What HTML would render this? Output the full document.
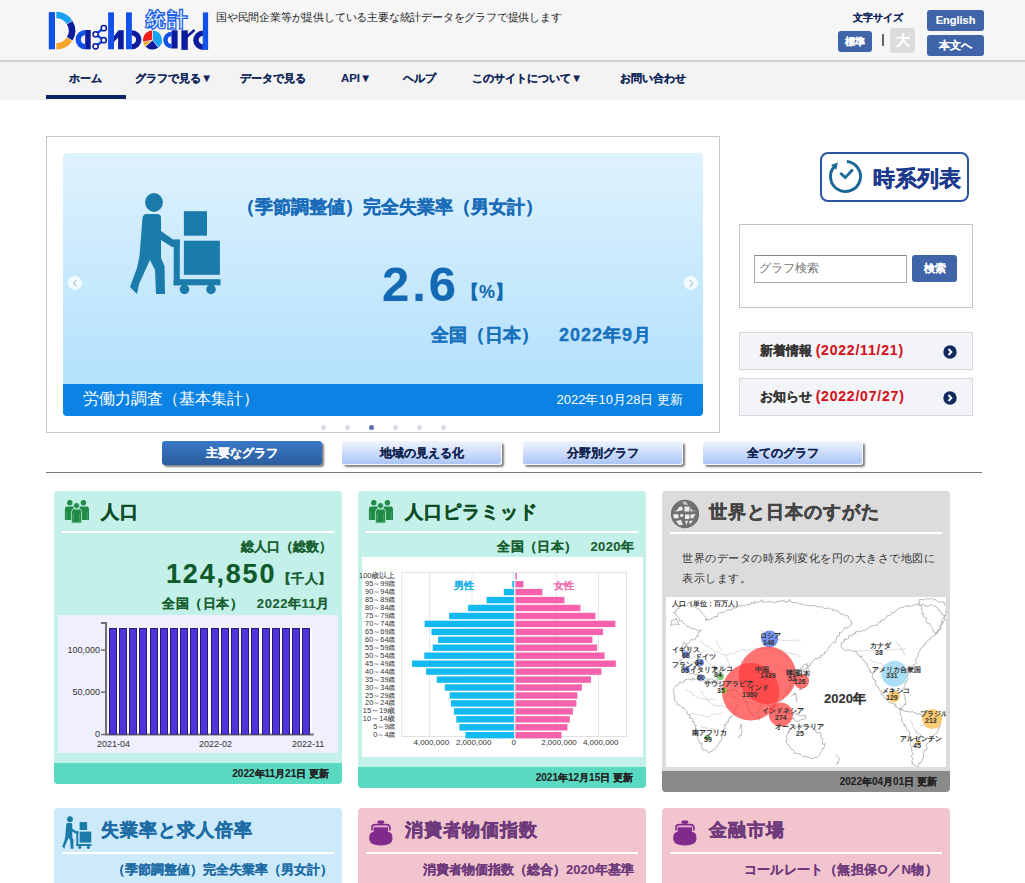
<!DOCTYPE html>
<html lang="ja"><head><meta charset="utf-8">
<style>
*{box-sizing:border-box}
html,body{margin:0;padding:0}
body{width:1025px;height:883px;overflow:hidden;position:relative;background:#fff;font-family:"Liberation Sans",sans-serif;color:#222}
.a{position:absolute}
#hdr{left:0;top:0;width:1025px;height:60px;background:#f6f6f6}
#nav{left:0;top:60px;width:1025px;height:40px;background:#f3f3f3;border-top:2px solid #d0d0d0}
.nv{position:absolute;top:8px;font-size:11.4px;font-weight:bold;color:#12275a;white-space:nowrap;line-height:16px}
.btn{position:absolute;background:#3f64a8;color:#fff;font-weight:bold;border-radius:3px;text-align:center;white-space:nowrap}
#frame{left:46px;top:136px;width:674px;height:297px;border:1px solid #c8c8c8;background:#fff}
#slide{left:63px;top:153px;width:640px;height:263px;border-radius:4px;background:linear-gradient(#def2fd,#aedffc);overflow:hidden}
#cap{left:0;top:231px;width:640px;height:32px;background:#0a83e4;color:#fff}
.dot{position:absolute;top:425px;width:5px;height:5px;border-radius:50%;background:#d8dbe6}
.tab{position:absolute;top:441px;height:24px;width:160px;border-radius:3px;text-align:center;font-size:12px;font-weight:bold;line-height:24px;color:#10234f;background:linear-gradient(#f0f4ff,#a9c3f6);box-shadow:inset -1px -1px 0 rgba(255,255,255,.85),2px 2px 2px rgba(0,0,0,.5)}
.card{position:absolute;width:288px;border-radius:4px;overflow:hidden}
.ct{position:absolute;left:48px;top:9px;font-size:18px;letter-spacing:1px;font-weight:bold;white-space:nowrap;-webkit-text-stroke:0.5px currentColor}
.cl{position:absolute;left:8px;width:272px;top:40px;height:2px;background:#fff}
.ft{position:absolute;left:0;width:288px;height:21px;font-size:10px;font-weight:bold;color:#222;text-align:right;padding-right:22px;line-height:21px}
[style*="font-weight:bold"],.nv,.tab,.ft,.btn{-webkit-text-stroke:0.12px currentColor}
.hv{-webkit-text-stroke:0.35px currentColor!important}
</style></head><body>
<div id="hdr" class="a"></div>
<svg class="a" style="left:0;top:0" width="220" height="60" viewBox="0 0 220 60"><rect x="48.8" y="12.1" width="6.2" height="37.2" fill="#1352e8"/><path d="M56.30,11.80 A18.9,18.9 0 0 1 72.15,20.41 L66.70,23.95 A12.4,12.4 0 0 0 56.30,18.30 Z" fill="#19a2f0"/><path d="M72.50,20.97 A18.9,18.9 0 0 1 72.50,40.43 L66.93,37.09 A12.4,12.4 0 0 0 66.93,24.31 Z" fill="#0c1a9e"/><path d="M72.15,40.99 A18.9,18.9 0 0 1 56.30,49.60 L56.30,43.10 A12.4,12.4 0 0 0 66.70,37.45 Z" fill="#f5a52a"/><path d="M85.2,30.0 A9.65,9.65 0 0 0 85.2,49.3 Z" fill="#1352e8"/><path d="M85.2,35.35 A4.3,4.3 0 0 0 85.2,43.949999999999996 Z" fill="#f6f6f6"/><rect x="85.2" y="30.0" width="5.5" height="19.299999999999997" fill="#0c1a9e"/><path d="M103.8,28.2 L95.6,34.3 L103.8,40.2 L95.6,46.3" stroke="#1352e8" stroke-width="2.6" fill="none"/><circle cx="103.8" cy="28.2" r="2.6" fill="#f6f6f6" stroke="#0c1a9e" stroke-width="1.5"/><circle cx="95.6" cy="34.3" r="2.6" fill="#f6f6f6" stroke="#0c1a9e" stroke-width="1.5"/><circle cx="103.8" cy="40.2" r="2.6" fill="#f6f6f6" stroke="#0c1a9e" stroke-width="1.5"/><circle cx="95.6" cy="46.3" r="2.6" fill="#f6f6f6" stroke="#0c1a9e" stroke-width="1.5"/><rect x="108.1" y="12.4" width="5.9" height="36.9" fill="#1352e8"/><path d="M114,36 L118.5,30.2 L123.7,30.2 L123.7,49.3 L118.1,49.3 L118.1,37.5 L114,42 Z" fill="#0c1a9e"/><rect x="126" y="12.4" width="5.9" height="36.9" fill="#1352e8"/><path d="M131.9,30.2 A9.55,9.55 0 0 1 131.9,49.3 Z" fill="#0c1a9e"/><path d="M131.9,35.6 A4.2,4.2 0 0 1 131.9,44 Z" fill="#f6f6f6"/><path d="M152.5,40.1 L152.50,30.60 A9.5,9.5 0 0 1 158.48,47.48 Z" fill="#19a2f0"/><path d="M152.5,40.1 L158.48,47.48 A9.5,9.5 0 0 1 145.44,46.46 Z" fill="#0c1a9e"/><path d="M152.5,40.1 L145.44,46.46 A9.5,9.5 0 0 1 143.21,42.08 Z" fill="#f5a52a"/><path d="M152.5,40.1 L143.21,42.08 A9.5,9.5 0 0 1 152.50,30.60 Z" fill="#ee1c1c"/><path d="M152.5,30.6 L152.5,40.1 L158.5,47.5 M152.5,40.1 L145.5,46.5 M152.5,40.1 L143.2,42" stroke="#f6f6f6" stroke-width="0.7" fill="none"/><path d="M171.6,31.700000000000003 A8.4,8.4 0 0 0 171.6,48.5 Z" fill="#1352e8"/><path d="M171.6,36.2 A3.9,3.9 0 0 0 171.6,44.0 Z" fill="#f6f6f6"/><rect x="171.6" y="30.3" width="6" height="18.2" fill="#0c1a9e"/><rect x="181.4" y="30.3" width="6.4" height="19.6" fill="#0c1a9e"/><path d="M186.5,37 L194.5,30" stroke="#0c1a9e" stroke-width="2.4"/><path d="M202.9,30.6 A9.3,9.3 0 0 0 202.9,49.9 Z" fill="#0c1a9e"/><path d="M202.9,35.9 A4.2,4.2 0 0 0 202.9,44.3 Z" fill="#f6f6f6"/><rect x="202.9" y="12.4" width="5.2" height="37.5" fill="#1352e8"/></svg>
<div class="a" style="left:146px;top:7px;font-size:19px;font-weight:bold;color:#1f5fe6;-webkit-text-stroke:2px #1f5fe6;white-space:nowrap;letter-spacing:3px">統計</div><div class="a" style="left:146px;top:7px;font-size:19px;color:#eaf5ff;white-space:nowrap;letter-spacing:3px">統計</div>
<div id="nav" class="a">
  <div class="a" style="left:46px;top:33px;width:80px;height:4px;background:#0a2563"></div>
  <div class="nv" style="left:69px">ホーム</div>
  <div class="nv" style="left:135px">グラフで見る▼</div>
  <div class="nv" style="left:240px">データで見る</div>
  <div class="nv" style="left:341px">API▼</div>
  <div class="nv" style="left:403px">ヘルプ</div>
  <div class="nv" style="left:472px">このサイトについて▼</div>
  <div class="nv" style="left:620px">お問い合わせ</div>
</div>
<div class="a" style="left:216px;top:10px;font-size:11px;letter-spacing:-0.2px;color:#222;white-space:nowrap">国や民間企業等が提供している主要な統計データをグラフで提供します</div>
<div class="a" style="left:853px;top:11px;font-size:10px;font-weight:bold;color:#12275a;white-space:nowrap">文字サイズ</div>
<div class="btn" style="left:838px;top:31px;width:34px;height:21px;font-size:10px;line-height:21px">標準</div>
<div class="a" style="left:882px;top:34px;width:1.5px;height:12px;background:#666"></div>
<div class="a" style="left:890px;top:28px;width:25px;height:25px;background:#dcdcdc;color:#fff;font-size:14px;font-weight:bold;text-align:center;line-height:25px;border-radius:3px">大</div>
<div class="btn" style="left:927px;top:10px;width:57px;height:21px;font-size:11px;line-height:21px">English</div>
<div class="btn" style="left:927px;top:35px;width:57px;height:21px;font-size:11px;line-height:21px">本文へ</div>

<div id="frame" class="a"></div>
<div id="slide" class="a">
  <svg class="a" style="left:57px;top:27px" width="120" height="120" viewBox="0 0 120 120" fill="#1b7bab">
    <ellipse cx="34" cy="22.4" rx="8.9" ry="9.5"/>
    <path d="M22.5,38 Q23,34 27,34 L37,34 Q41,34 41,38 L41,51 L53,59.5 L60,59.5 L60,67 L52,67 L41,60 L41,78 L44.5,86 L45,114 L36,114 L35,90 L30,80 L19,104 L17,114 L10,107 L17,88 L19.5,76 Z"/>
    <rect x="53.7" y="59.8" width="6.1" height="45.5"/>
    <rect x="53.7" y="99.2" width="46.8" height="6.1"/>
    <circle cx="64.5" cy="109.4" r="4.8"/>
    <circle cx="91" cy="109.4" r="4.8"/>
    <rect x="63.9" y="31.2" width="23.1" height="24.5"/>
    <rect x="63.9" y="60.7" width="36" height="34.1"/>
  </svg>
  <div class="a hv" style="left:174px;top:42px;font-size:18px;font-weight:bold;color:#1a6cb9;white-space:nowrap">（季節調整値）完全失業率（男女計）</div>
  <div class="a" style="left:319px;top:103px;font-size:49px;font-weight:bold;color:#1469b4;white-space:nowrap;letter-spacing:3px">2.6</div>
  <div class="a" style="left:398px;top:127px;font-size:18px;font-weight:bold;color:#1469b4;white-space:nowrap">【%】</div>
  <div class="a hv" style="left:368px;top:170px;font-size:18px;font-weight:bold;color:#1a72bf;white-space:nowrap">全国（日本）</div><div class="a hv" style="left:496px;top:170px;font-size:18px;font-weight:bold;color:#1a72bf;white-space:nowrap;letter-spacing:1px">2022年9月</div>
  <div class="a" style="left:5px;top:123px;width:14.4px;height:14.4px;border-radius:50%;background:rgba(255,255,255,.8)"><svg class="a" style="left:0;top:0" width="14.4" height="14.4" viewBox="0 0 14.4 14.4"><path d="M8.6,4 L5.6,7.2 L8.6,10.4" stroke="#b9d2e2" stroke-width="1.5" fill="none"/></svg></div>
  <div class="a" style="left:621px;top:123px;width:14.4px;height:14.4px;border-radius:50%;background:rgba(255,255,255,.8)"><svg class="a" style="left:0;top:0" width="14.4" height="14.4" viewBox="0 0 14.4 14.4"><path d="M5.8,4 L8.8,7.2 L5.8,10.4" stroke="#b9d2e2" stroke-width="1.5" fill="none"/></svg></div>
  <div id="cap" class="a">
    <div class="a" style="left:20px;top:5px;font-size:16px;white-space:nowrap">労働力調査（基本集計）</div>
    <div class="a" style="right:20px;top:7px;font-size:13px;white-space:nowrap">2022年10月28日 更新</div>
  </div>
</div>
<div class="dot" style="left:321px"></div>
<div class="dot" style="left:345px"></div>
<div class="dot" style="left:369px;background:#5a74b0"></div>
<div class="dot" style="left:393px"></div>
<div class="dot" style="left:417px"></div>
<div class="dot" style="left:441px"></div>

<div class="a" style="left:820px;top:152px;width:149px;height:50px;border:2px solid #2d55a2;border-radius:8px;background:#fff">
  <svg class="a" style="left:4px;top:5px" width="38" height="38" viewBox="0 0 38 38">
    <path d="M20.8,2.56 A15,15 0 1 1 8.35,7.46" stroke="#1a6896" stroke-width="3" fill="none"/>
    <path d="M11.9,3.5 L5,5.9 L10.3,10.7 Z" fill="#1a6896"/>
    <path d="M14.3,13.9 L19.3,18.6 L26.8,10.5" stroke="#1a6896" stroke-width="2.8" fill="none"/>
  </svg>
  <div class="a hv" style="left:51px;top:10px;font-size:22px;font-weight:bold;color:#1b3a8c;white-space:nowrap">時系列表</div>
</div>
<div class="a" style="left:739px;top:224px;width:234px;height:84px;border:1px solid #c4c4c4;background:#fff">
  <div class="a" style="left:14px;top:30px;width:153px;height:28px;border:1px solid #a8a8a8;border-top-color:#888;background:#fff;font-size:12px;color:#777;padding:4px 4px;white-space:nowrap;line-height:16px">グラフ検索</div>
  <div class="btn" style="left:172px;top:30px;width:45px;height:27px;font-size:11px;line-height:27px">検索</div>
</div>
<div class="a" style="left:739px;top:332px;width:234px;height:38px;border:1px solid #d3d6db;background:#f3f4f7">
  <div class="a" style="left:20px;top:9px;font-size:13px;font-weight:bold;color:#333;white-space:nowrap">新着情報 <span style="color:#d3121c;font-size:14px;letter-spacing:0.8px">(2022/11/21)</span></div>
  <svg class="a" style="left:203px;top:12px" width="14" height="14" viewBox="0 0 14 14"><circle cx="7" cy="7" r="6.7" fill="#0f2a5e"/><path d="M5.5,4 L8.3,7 L5.5,10" stroke="#fff" stroke-width="2" fill="none"/></svg>
</div>
<div class="a" style="left:739px;top:378px;width:234px;height:38px;border:1px solid #d3d6db;background:#f3f4f7">
  <div class="a" style="left:20px;top:9px;font-size:13px;font-weight:bold;color:#333;white-space:nowrap">お知らせ <span style="color:#d3121c;font-size:14px;letter-spacing:0.8px">(2022/07/27)</span></div>
  <svg class="a" style="left:203px;top:12px" width="14" height="14" viewBox="0 0 14 14"><circle cx="7" cy="7" r="6.7" fill="#0f2a5e"/><path d="M5.5,4 L8.3,7 L5.5,10" stroke="#fff" stroke-width="2" fill="none"/></svg>
</div>
<div class="tab" style="left:162px;color:#fff;background:linear-gradient(#3a78c8,#2a5d9e);box-shadow:2px 2px 2px rgba(0,0,0,.5)">主要なグラフ</div>
<div class="tab" style="left:342px">地域の見える化</div>
<div class="tab" style="left:523px">分野別グラフ</div>
<div class="tab" style="left:703px">全てのグラフ</div>
<div class="a" style="left:46px;top:472px;width:936px;height:1px;background:#777"></div>


<div class="card" style="left:54px;top:491px;height:293px;background:#c3f0e9">
  <div class="a" style="left:10px;top:8px"><svg width="26" height="25" viewBox="0 0 26 25" fill="#208a46"><circle cx="5.8" cy="3.8" r="2.7"/><circle cx="19.4" cy="3.8" r="2.7"/><path d="M0.9,10 Q0.9,7.6 3.3,7.6 L9.8,7.6 L9.8,21 L0.9,21 Z"/><path d="M15.6,7.6 L22.6,7.6 Q25,7.6 25,10 L25,21 L15.6,21 Z"/><path d="M2.6,13 V21 M23.3,13 V21" stroke="#5cb37c" stroke-width="0.6"/><circle cx="12.5" cy="6.6" r="2.9" stroke="#b0ecd0" stroke-width="0.8"/><path d="M7.6,12.6 Q7.6,10 10.1,10 L15,10 Q17.6,10 17.6,12.6 L17.6,24 L7.6,24 Z" stroke="#a6e6c4" stroke-width="0.9"/><path d="M9.4,15 V23.5 M15.8,15 V23.5" stroke="#5cb37c" stroke-width="0.6"/></svg></div>
  <div class="ct" style="left:47px;top:9px;color:#0e4d24">人口</div>
  <div class="cl"></div>
  <div class="a" style="right:10px;top:47px;font-size:13px;font-weight:bold;color:#175f30;white-space:nowrap">総人口（総数）</div>
  <div class="a" style="left:112px;top:68px;font-size:27px;font-weight:bold;color:#0f5a2a;white-space:nowrap;letter-spacing:1.8px">124,850</div>
  <div class="a" style="left:224px;top:79px;font-size:13px;font-weight:bold;color:#175f30;white-space:nowrap;letter-spacing:0.3px">【千人】</div>
  <div class="a" style="left:108px;top:104px;font-size:13px;font-weight:bold;color:#175f30;white-space:nowrap;letter-spacing:0.55px">全国（日本）　2022年11月</div>
  <div class="a" style="left:4px;top:124px;width:280px;height:138px;background:#efeffd">
    <svg class="a" style="left:0;top:0" width="280" height="138" viewBox="0 0 280 138">
      <rect x="50.3" y="13" width="203.5" height="106.6" fill="#fff"/><path d="M43,8 L48,8 L48,119.6 L255.7,119.6" stroke="#707070" stroke-width="2" fill="none"/>
      <path d="M43,35 L48,35 M43,77.3 L48,77.3 M43,119.6 L48,119.6" stroke="#707070" stroke-width="1.5"/>
      <rect x="51" y="13" width="8" height="106.6" fill="#2a1a6e"/><rect x="52" y="14" width="6" height="105" fill="#5133dc"/><rect x="61" y="13" width="8" height="106.6" fill="#2a1a6e"/><rect x="62" y="14" width="6" height="105" fill="#5133dc"/><rect x="71" y="13" width="8" height="106.6" fill="#2a1a6e"/><rect x="72" y="14" width="6" height="105" fill="#5133dc"/><rect x="81" y="13" width="8" height="106.6" fill="#2a1a6e"/><rect x="82" y="14" width="6" height="105" fill="#5133dc"/><rect x="92" y="13" width="8" height="106.6" fill="#2a1a6e"/><rect x="93" y="14" width="6" height="105" fill="#5133dc"/><rect x="102" y="13" width="8" height="106.6" fill="#2a1a6e"/><rect x="103" y="14" width="6" height="105" fill="#5133dc"/><rect x="112" y="13" width="8" height="106.6" fill="#2a1a6e"/><rect x="113" y="14" width="6" height="105" fill="#5133dc"/><rect x="122" y="13" width="8" height="106.6" fill="#2a1a6e"/><rect x="123" y="14" width="6" height="105" fill="#5133dc"/><rect x="132" y="13" width="8" height="106.6" fill="#2a1a6e"/><rect x="133" y="14" width="6" height="105" fill="#5133dc"/><rect x="142" y="13" width="8" height="106.6" fill="#2a1a6e"/><rect x="143" y="14" width="6" height="105" fill="#5133dc"/><rect x="153" y="13" width="8" height="106.6" fill="#2a1a6e"/><rect x="154" y="14" width="6" height="105" fill="#5133dc"/><rect x="163" y="13" width="8" height="106.6" fill="#2a1a6e"/><rect x="164" y="14" width="6" height="105" fill="#5133dc"/><rect x="173" y="13" width="8" height="106.6" fill="#2a1a6e"/><rect x="174" y="14" width="6" height="105" fill="#5133dc"/><rect x="183" y="13" width="8" height="106.6" fill="#2a1a6e"/><rect x="184" y="14" width="6" height="105" fill="#5133dc"/><rect x="193" y="13" width="8" height="106.6" fill="#2a1a6e"/><rect x="194" y="14" width="6" height="105" fill="#5133dc"/><rect x="204" y="13" width="8" height="106.6" fill="#2a1a6e"/><rect x="205" y="14" width="6" height="105" fill="#5133dc"/><rect x="214" y="13" width="8" height="106.6" fill="#2a1a6e"/><rect x="215" y="14" width="6" height="105" fill="#5133dc"/><rect x="224" y="13" width="8" height="106.6" fill="#2a1a6e"/><rect x="225" y="14" width="6" height="105" fill="#5133dc"/><rect x="234" y="13" width="8" height="106.6" fill="#2a1a6e"/><rect x="235" y="14" width="6" height="105" fill="#5133dc"/><rect x="244" y="13" width="8" height="106.6" fill="#2a1a6e"/><rect x="245" y="14" width="6" height="105" fill="#5133dc"/>
    </svg>
    <div class="a" style="right:238px;top:30px;font-size:9px;color:#333;white-space:nowrap">100,000</div>
    <div class="a" style="right:238px;top:72px;font-size:9px;color:#333;white-space:nowrap">50,000</div>
    <div class="a" style="right:238px;top:114px;font-size:9px;color:#333;white-space:nowrap">0</div>
    <div class="a" style="left:39px;top:124px;font-size:9px;color:#333;white-space:nowrap">2021-04</div>
    <div class="a" style="left:141px;top:124px;font-size:9px;color:#333;white-space:nowrap">2022-02</div>
    <div class="a" style="left:234px;top:124px;font-size:9px;color:#333;white-space:nowrap">2022-11</div>
  </div>
  <div class="ft" style="top:272px;background:#5ad9c1;padding-right:13px">2022年11月21日 更新</div>
</div>
<div class="card" style="left:358px;top:491px;height:297px;background:#c3f0e9">
  <div class="a" style="left:10px;top:8px"><svg width="26" height="25" viewBox="0 0 26 25" fill="#208a46"><circle cx="5.8" cy="3.8" r="2.7"/><circle cx="19.4" cy="3.8" r="2.7"/><path d="M0.9,10 Q0.9,7.6 3.3,7.6 L9.8,7.6 L9.8,21 L0.9,21 Z"/><path d="M15.6,7.6 L22.6,7.6 Q25,7.6 25,10 L25,21 L15.6,21 Z"/><path d="M2.6,13 V21 M23.3,13 V21" stroke="#5cb37c" stroke-width="0.6"/><circle cx="12.5" cy="6.6" r="2.9" stroke="#b0ecd0" stroke-width="0.8"/><path d="M7.6,12.6 Q7.6,10 10.1,10 L15,10 Q17.6,10 17.6,12.6 L17.6,24 L7.6,24 Z" stroke="#a6e6c4" stroke-width="0.9"/><path d="M9.4,15 V23.5 M15.8,15 V23.5" stroke="#5cb37c" stroke-width="0.6"/></svg></div>
  <div class="ct" style="left:47px;top:9px;color:#0e4d24">人口ピラミッド</div>
  <div class="cl"></div>
  <div class="a" style="right:12px;top:47px;font-size:13px;font-weight:bold;color:#175f30;white-space:nowrap;letter-spacing:0.3px">全国（日本）　2020年</div>
  <div class="a" style="left:3.5px;top:66px;width:281px;height:200px;background:#fff">
    <svg class="a" style="left:0;top:0" width="281" height="200" viewBox="0 0 281 200">
      <rect x="39.9" y="15.3" width="224.5" height="164.2" fill="none" stroke="#e0e0e0" stroke-width="1"/>
      <path d="M67.7,15.3 V179.5 M236.5,15.3 V179.5 M110.0,15.3 V179.5 M194.5,15.3 V179.5" stroke="#e6e6e6" stroke-width="1"/>
      <rect x="151.8" y="16.0" width="0.3" height="6.4" fill="#12b9f2"/><rect x="153.4" y="16.0" width="1.5" height="6.4" fill="#f562ab"/><rect x="150.3" y="24.0" width="1.8" height="6.4" fill="#12b9f2"/><rect x="153.4" y="24.0" width="8.0" height="6.4" fill="#f562ab"/><rect x="141.8" y="31.9" width="10.3" height="6.4" fill="#12b9f2"/><rect x="153.4" y="31.9" width="27.0" height="6.4" fill="#f562ab"/><rect x="124.6" y="39.9" width="27.5" height="6.4" fill="#12b9f2"/><rect x="153.4" y="39.9" width="49.0" height="6.4" fill="#f562ab"/><rect x="106.1" y="47.8" width="46.0" height="6.4" fill="#12b9f2"/><rect x="153.4" y="47.8" width="65.0" height="6.4" fill="#f562ab"/><rect x="87.1" y="55.8" width="65.0" height="6.4" fill="#12b9f2"/><rect x="153.4" y="55.8" width="80.0" height="6.4" fill="#f562ab"/><rect x="62.6" y="63.7" width="89.5" height="6.4" fill="#12b9f2"/><rect x="153.4" y="63.7" width="100.0" height="6.4" fill="#f562ab"/><rect x="69.5" y="71.7" width="82.6" height="6.4" fill="#12b9f2"/><rect x="153.4" y="71.7" width="87.6" height="6.4" fill="#f562ab"/><rect x="76.1" y="79.6" width="76.0" height="6.4" fill="#12b9f2"/><rect x="153.4" y="79.6" width="77.0" height="6.4" fill="#f562ab"/><rect x="70.7" y="87.5" width="81.4" height="6.4" fill="#12b9f2"/><rect x="153.4" y="87.5" width="81.7" height="6.4" fill="#f562ab"/><rect x="62.3" y="95.5" width="89.8" height="6.4" fill="#12b9f2"/><rect x="153.4" y="95.5" width="89.2" height="6.4" fill="#f562ab"/><rect x="50.1" y="103.5" width="102.0" height="6.4" fill="#12b9f2"/><rect x="153.4" y="103.5" width="100.4" height="6.4" fill="#f562ab"/><rect x="64.1" y="111.4" width="88.0" height="6.4" fill="#12b9f2"/><rect x="153.4" y="111.4" width="86.0" height="6.4" fill="#f562ab"/><rect x="74.7" y="119.4" width="77.4" height="6.4" fill="#12b9f2"/><rect x="153.4" y="119.4" width="75.6" height="6.4" fill="#f562ab"/><rect x="82.8" y="127.3" width="69.3" height="6.4" fill="#12b9f2"/><rect x="153.4" y="127.3" width="66.5" height="6.4" fill="#f562ab"/><rect x="87.7" y="135.3" width="64.4" height="6.4" fill="#12b9f2"/><rect x="153.4" y="135.3" width="62.0" height="6.4" fill="#f562ab"/><rect x="88.9" y="143.2" width="63.2" height="6.4" fill="#12b9f2"/><rect x="153.4" y="143.2" width="61.0" height="6.4" fill="#f562ab"/><rect x="91.9" y="151.2" width="60.2" height="6.4" fill="#12b9f2"/><rect x="153.4" y="151.2" width="57.5" height="6.4" fill="#f562ab"/><rect x="94.3" y="159.1" width="57.8" height="6.4" fill="#12b9f2"/><rect x="153.4" y="159.1" width="54.4" height="6.4" fill="#f562ab"/><rect x="97.4" y="167.1" width="54.7" height="6.4" fill="#12b9f2"/><rect x="153.4" y="167.1" width="52.0" height="6.4" fill="#f562ab"/><rect x="103.4" y="175.0" width="48.7" height="6.4" fill="#12b9f2"/><rect x="153.4" y="175.0" width="46.0" height="6.4" fill="#f562ab"/>
    </svg>
    <div class="a" style="right:247px;top:14.2px;font-size:7.5px;line-height:10px;color:#333;white-space:nowrap">100歳以上</div><div class="a" style="right:247px;top:22.2px;font-size:7.4px;line-height:10px;color:#333;white-space:nowrap">95～99歳</div><div class="a" style="right:247px;top:30.1px;font-size:7.4px;line-height:10px;color:#333;white-space:nowrap">90～94歳</div><div class="a" style="right:247px;top:38.1px;font-size:7.4px;line-height:10px;color:#333;white-space:nowrap">85～89歳</div><div class="a" style="right:247px;top:46.0px;font-size:7.4px;line-height:10px;color:#333;white-space:nowrap">80～84歳</div><div class="a" style="right:247px;top:54.0px;font-size:7.4px;line-height:10px;color:#333;white-space:nowrap">75～79歳</div><div class="a" style="right:247px;top:61.9px;font-size:7.4px;line-height:10px;color:#333;white-space:nowrap">70～74歳</div><div class="a" style="right:247px;top:69.9px;font-size:7.4px;line-height:10px;color:#333;white-space:nowrap">65～69歳</div><div class="a" style="right:247px;top:77.8px;font-size:7.4px;line-height:10px;color:#333;white-space:nowrap">60～64歳</div><div class="a" style="right:247px;top:85.8px;font-size:7.4px;line-height:10px;color:#333;white-space:nowrap">55～59歳</div><div class="a" style="right:247px;top:93.7px;font-size:7.4px;line-height:10px;color:#333;white-space:nowrap">50～54歳</div><div class="a" style="right:247px;top:101.7px;font-size:7.4px;line-height:10px;color:#333;white-space:nowrap">45～49歳</div><div class="a" style="right:247px;top:109.6px;font-size:7.4px;line-height:10px;color:#333;white-space:nowrap">40～44歳</div><div class="a" style="right:247px;top:117.6px;font-size:7.4px;line-height:10px;color:#333;white-space:nowrap">35～39歳</div><div class="a" style="right:247px;top:125.5px;font-size:7.4px;line-height:10px;color:#333;white-space:nowrap">30～34歳</div><div class="a" style="right:247px;top:133.5px;font-size:7.4px;line-height:10px;color:#333;white-space:nowrap">25～29歳</div><div class="a" style="right:247px;top:141.4px;font-size:7.4px;line-height:10px;color:#333;white-space:nowrap">20～24歳</div><div class="a" style="right:247px;top:149.4px;font-size:7.5px;line-height:10px;color:#333;white-space:nowrap">15～19歳</div><div class="a" style="right:247px;top:157.3px;font-size:7.5px;line-height:10px;color:#333;white-space:nowrap">10～14歳</div><div class="a" style="right:247px;top:165.2px;font-size:7.4px;line-height:10px;color:#333;white-space:nowrap">5～9歳</div><div class="a" style="right:247px;top:173.2px;font-size:7.4px;line-height:10px;color:#333;white-space:nowrap">0～4歳</div>
    <div class="a" style="left:92.9px;top:22.0px;font-size:10px;font-weight:bold;color:#1fb0e6;white-space:nowrap">男性</div>
    <div class="a" style="left:192.7px;top:22.0px;font-size:10px;font-weight:bold;color:#f070b0;white-space:nowrap">女性</div>
    <div class="a" style="left:52.0px;top:181.0px;font-size:8px;line-height:10px;color:#333;white-space:nowrap">4,000,000</div>
    <div class="a" style="left:94.4px;top:181.0px;font-size:8px;line-height:10px;color:#333;white-space:nowrap">2,000,000</div>
    <div class="a" style="left:150.0px;top:181.0px;font-size:8px;line-height:10px;color:#333;white-space:nowrap">0</div>
    <div class="a" style="left:179.7px;top:181.0px;font-size:8px;line-height:10px;color:#333;white-space:nowrap">2,000,000</div>
    <div class="a" style="left:221.4px;top:181.0px;font-size:8px;line-height:10px;color:#333;white-space:nowrap">4,000,000</div>
  </div>
  <div class="ft" style="top:276px;background:#5ad9c1;padding-right:13px">2021年12月15日 更新</div>
</div>
<div class="card" style="left:662px;top:491px;height:301px;background:#dcdcdc">
  <div class="a" style="left:9px;top:8px"><svg width="28" height="30" viewBox="0 0 28 30"><circle cx="14" cy="15" r="14.2" fill="#707070"/><g fill="#ececec"><path d="M2.5,12 L6,11.5 L8,8 L11,7.5 L12,11 L6,12.5 Z"/><rect x="13.5" y="7.5" width="5" height="5"/><path d="M19.5,8 L21,11.5 L25,12 L19.5,12.5 Z"/><path d="M2,15.5 L7,15 L8,19 L3,19.5 Z"/><path d="M9,15.5 L12,15 L12.5,17.5 L9.5,18 Z"/><rect x="14" y="15.5" width="4.5" height="4.5"/><path d="M19.5,15.5 L24.5,15 L22,19.5 L19.5,19 Z"/><path d="M5,22 L10,21 L12,26 L8,26 Z"/><path d="M14,22 L17,21.5 L15.5,26 Z"/><path d="M18,22 L22,21.5 L19,25.5 Z"/><path d="M11,3 L15,2.5 L17,6 L13,5.5 Z" fill="#c8c8c8"/></g></svg></div>
  <div class="ct" style="left:47px;top:9px;color:#444">世界と日本のすがた</div>
  <div class="cl" style="top:41px"></div>
  <div class="a" style="left:20px;top:57px;font-size:11px;letter-spacing:0.5px;line-height:20.3px;color:#333;white-space:nowrap">世界のデータの時系列変化を円の大きさで地図に<br>表示します。</div>
  <div class="a" style="left:3.6px;top:105.5px;width:280.4px;height:170.2px;background:#fff;overflow:hidden">
    <svg class="a" style="left:0;top:0" width="281" height="171" viewBox="0 0 281 171"><g stroke="#4a4a4a" stroke-width="0.5" fill="none" opacity="0.75"><path d="M7.3,15.7 L9.9,14.2 L10.2,13.3 L10.8,11.9 L13.3,11.5 L13.3,9.0 L15.0,9.8 L18.2,7.3 L20.7,9.2 L21.5,7.8 L21.8,5.7 L24.5,5.4 L25.0,6.8 L26.0,8.4 L28.5,10.4 L30.2,10.9 L31.5,11.9 L32.9,11.9 L35.7,14.8 L36.1,15.5 L35.6,15.7 L36.4,16.7 L38.5,19.0 L39.6,20.3 L40.7,23.0 L39.1,22.7 L43.5,22.8 L45.6,21.9 L45.3,21.8 L48.6,20.0 L48.2,19.4 L51.9,19.6 L51.1,17.4 L52.5,16.1 L55.7,15.5 L56.6,15.4 L57.2,15.5 L58.7,14.6 L60.3,13.4 L62.2,12.4 L65.7,13.2 L65.6,12.8 L67.0,10.9 L70.3,10.9 L70.0,11.4 L71.9,9.1 L75.0,8.9 L75.4,7.9 L76.5,8.8 L78.5,8.5 L80.4,7.8 L83.6,7.5 L84.3,7.9 L85.0,5.5 L88.6,6.6 L88.6,4.4 L91.6,5.8 L91.9,5.2 L95.4,3.8 L95.9,2.7 L96.5,5.1 L98.7,4.7 L100.4,5.2 L103.0,4.1 L103.6,5.4 L104.9,4.3 L107.9,6.2 L109.7,4.9 L112.2,4.5 L111.5,4.5 L114.3,3.7 L115.2,4.3 L117.9,3.4 L119.0,5.2 L122.3,4.4 L123.2,3.9 L123.5,2.3 L124.8,5.0 L128.3,5.6 L128.2,5.2 L131.0,5.9 L132.3,7.0 L133.3,6.3 L136.7,7.7 L138.3,7.6 L140.2,8.6 L140.7,8.2 L143.8,8.9 L144.2,8.9 L147.0,8.6 L148.1,8.3 L149.6,9.1 L150.0,9.4 L154.0,10.3 L155.0,9.2 L156.7,10.2 L157.6,11.3 L158.3,11.5 L159.8,11.5 L162.7,11.0 L164.9,12.2 L166.4,13.7 L167.1,11.8 L168.9,14.0 L170.3,13.4 L173.7,15.4 L174.1,16.8 L175.5,16.9 L176.7,17.1 L179.9,19.1 L181.8,18.4 L182.6,19.0 L182.3,21.1 L184.9,23.6 L185.3,25.5 L185.0,25.0 L186.3,26.9 L184.2,28.1 L183.9,29.2 L181.6,31.0 L181.9,30.8 L178.2,30.6 L178.8,31.5 L176.9,33.7 L174.9,35.7 L173.1,35.4 L173.3,36.6 L173.3,38.5 L170.5,39.5 L170.7,41.9 L169.7,43.9 L169.0,46.0 L167.5,45.4 L165.8,46.7 L163.5,48.8 L164.1,49.3 L161.8,51.1 L161.8,52.7 L160.4,54.5 L158.7,55.7 L158.9,55.0 L157.8,57.8 L154.6,58.2 L154.7,60.6 L152.5,60.5 L152.2,61.9 L150.8,61.8 L148.4,61.9 L147.0,64.3 L145.8,65.4 L143.7,67.2 L144.6,68.7 L142.5,69.6 L140.9,71.2 L141.3,71.1 L137.7,72.1 L137.3,73.8 L135.6,72.7 L134.8,73.6 L133.2,74.6 L131.0,77.6 L129.5,77.3 L129.4,80.1 L129.3,81.3 L128.6,82.1 L127.6,82.4 L125.0,85.2 L124.5,87.4 L124.8,88.6 L124.6,90.3 L122.6,91.5 L123.3,94.5 L120.6,95.7 L121.6,96.2 L119.6,96.7 L118.5,98.8 L117.7,98.9 L117.6,101.5 L114.9,103.5 L114.2,103.9 L113.3,104.0 L111.7,106.1 L111.6,108.6 L107.8,108.1 L105.4,108.7 L105.2,110.5 L103.1,107.8 L101.2,107.4 L101.9,104.9 L100.3,103.5 L97.6,102.8 L98.1,104.5 L96.5,106.8 L95.1,108.6 L94.4,109.5 L94.0,110.2 L94.0,112.3 L92.8,113.8 L92.5,114.6 L90.1,116.8 L89.8,117.6 L88.8,118.8 L87.3,118.8 L86.4,118.8 L86.1,115.9 L83.9,115.9 L83.0,114.6 L84.1,110.8 L81.7,110.8 L81.1,107.6 L81.9,106.9 L81.2,104.5 L79.1,104.6 L77.1,102.1 L77.9,102.6 L77.6,99.2 L75.4,99.5 L74.4,98.0 L72.3,95.4 L70.9,94.3 L70.8,94.5 L69.6,92.6 L66.8,92.7 L66.8,94.8 L65.3,92.4 L61.3,94.7 L61.1,93.0 L59.5,91.0 L58.8,89.7 L57.9,87.4 L56.9,88.4 L54.1,86.4 L54.0,85.3 L51.1,83.6 L50.4,82.2 L49.8,83.9 L47.7,83.6 L45.9,82.1 L44.3,81.9 L43.7,82.3 L40.2,82.2 L39.8,81.4 L38.4,80.1 L37.0,80.9 L34.9,80.2 L33.4,78.6 L31.6,77.1 L29.0,77.4 L26.5,76.5 L26.4,76.5 L23.7,76.7 L23.4,74.3 L22.0,74.1 L20.3,72.8 L20.1,72.7 L17.9,72.2 L18.0,68.7 L16.5,68.9 L15.0,66.4 L13.8,64.3 L14.1,62.5 L15.0,63.6 L17.0,61.5 L19.4,60.7 L20.7,59.9 L21.5,57.4 L22.2,58.2 L22.0,57.6 L23.5,55.4 L22.7,53.9 L23.1,51.2 L23.2,50.5 L21.3,49.4 L20.1,46.9 L22.3,46.7 L22.8,46.1 L24.4,43.2 L25.7,42.3 L27.0,43.2 L29.1,42.5 L31.0,38.7 L32.7,39.5 L31.3,37.8 L33.2,35.0 L35.6,32.8 L32.8,34.3 L31.6,32.8 L30.6,33.3 L28.0,31.2 L26.4,31.7 L23.6,30.3 L23.1,29.5 L21.6,29.9 L20.3,27.9 L19.3,27.3 L18.5,26.6 L17.7,26.7 L15.9,23.6 L13.1,24.0 L13.8,22.1 L11.5,19.9 L11.3,19.4 L9.9,18.3 L9.2,15.9 L7.4,15.5"/><path d="M23.7,82.7 L27.1,82.8 L26.5,81.0 L28.8,82.3 L31.4,81.8 L32.8,82.1 L33.3,84.0 L36.1,84.0 L37.3,83.8 L38.4,83.7 L41.4,85.2 L41.3,83.5 L44.8,85.0 L46.3,84.2 L47.0,84.5 L49.6,85.0 L50.8,86.8 L51.2,86.6 L53.5,88.6 L54.0,88.2 L54.4,90.5 L55.6,89.4 L58.1,91.5 L59.6,92.0 L61.1,92.4 L61.0,95.0 L62.0,95.2 L65.0,97.3 L65.2,97.0 L66.7,99.6 L68.1,99.2 L70.3,101.5 L72.2,103.5 L73.5,103.3 L72.6,104.7 L70.8,106.7 L71.8,109.7 L69.5,110.0 L69.2,111.7 L68.7,113.5 L67.6,115.7 L68.2,116.9 L67.3,118.2 L64.6,119.9 L65.4,119.9 L62.2,121.8 L62.5,123.2 L62.6,124.6 L61.2,124.4 L60.0,127.9 L58.2,127.7 L59.4,131.4 L57.1,132.4 L56.7,134.3 L57.5,134.7 L55.9,137.6 L56.1,139.3 L55.2,139.8 L56.2,142.3 L54.4,143.6 L53.9,145.4 L53.3,145.9 L51.9,147.9 L50.9,149.6 L49.7,151.2 L48.9,151.9 L46.7,153.4 L46.3,154.0 L44.2,154.6 L43.0,156.1 L40.1,153.3 L37.6,153.3 L37.1,153.2 L35.8,150.0 L35.1,149.4 L36.1,146.7 L33.5,145.9 L34.1,145.6 L31.9,142.0 L31.6,140.8 L31.3,140.5 L31.8,137.6 L30.4,136.1 L29.9,135.8 L29.9,133.6 L30.8,131.8 L29.0,131.3 L30.3,128.3 L28.9,128.3 L28.4,124.8 L26.2,125.3 L27.2,122.4 L25.5,121.3 L23.8,121.2 L23.8,117.8 L21.1,117.0 L21.1,116.5 L21.0,114.6 L18.5,112.0 L17.9,110.9 L18.1,110.5 L16.3,110.8 L14.0,108.6 L12.5,108.2 L10.9,107.3 L11.8,106.3 L8.6,103.9 L9.0,102.5 L8.0,101.8 L8.9,100.4 L8.3,98.0 L7.8,96.6 L7.8,94.1 L7.2,92.7 L7.7,92.4 L7.8,92.1 L9.3,89.6 L9.9,88.4 L12.0,88.3 L12.9,87.1 L13.4,85.2 L16.0,86.0 L18.6,84.6 L18.1,83.2 L21.6,82.2 L22.9,82.1 L24.4,81.5"/><path d="M13.1,52.8 L16.2,49.2 L16.7,48.0 L17.1,47.1 L17.9,45.1 L18.9,47.5 L19.4,47.9 L21.4,49.9 L22.8,52.1 L23.0,53.1 L22.2,53.9 L19.5,55.4 L19.9,58.5 L17.6,59.2 L18.5,58.1 L15.7,55.6 L15.1,53.7 L15.0,52.0 L14.4,51.5"/><path d="M5.5,23.3 L6.4,23.2 L9.1,23.0 L10.1,21.1 L10.8,21.9 L11.5,25.4 L13.7,27.3 L11.1,27.3 L7.6,27.1 L6.7,28.4 L4.4,28.2 L5.1,27.6 L5.6,25.5 L4.4,23.5"/><path d="M133.5,72.2 L136.6,70.4 L136.4,69.1 L137.1,68.5 L140.5,66.7 L141.0,66.4 L140.3,68.3 L142.1,68.0 L141.3,69.8 L143.3,72.7 L143.3,74.9 L144.0,75.4 L142.9,78.4 L142.3,80.0 L142.8,80.8 L142.3,81.7 L142.6,85.4 L141.8,86.0 L139.4,88.3 L138.7,89.7 L137.3,90.1 L137.7,90.3 L135.7,91.2 L133.2,92.7 L135.3,93.0 L134.1,89.7 L133.8,89.1 L132.8,87.1 L133.5,83.9 L131.6,83.4 L131.8,81.5 L133.2,79.2 L133.3,77.7 L133.7,76.2 L134.2,73.7 L134.6,72.3 L134.4,71.5"/><path d="M107.6,111.8 L108.0,111.8 L110.2,113.1 L112.2,113.9 L113.2,115.1 L115.9,115.3 L116.4,114.8 L118.6,116.6 L120.2,115.9 L121.7,117.1 L123.1,115.2 L125.8,117.7 L127.6,117.2 L129.3,116.7 L130.6,116.4 L131.1,117.7 L133.7,117.9 L134.2,119.0 L137.1,118.2 L138.2,118.9 L139.7,118.4 L139.9,121.5 L137.6,122.1 L135.4,122.7 L133.3,123.3 L132.6,124.5 L129.6,124.0 L128.0,123.0 L128.4,121.3 L124.9,121.8 L123.4,120.9 L123.1,122.6 L120.1,121.1 L118.9,119.7 L115.8,121.4 L114.8,119.8 L114.7,120.5 L111.8,117.9 L109.6,119.2 L109.4,116.7 L108.6,115.1 L107.0,112.6 L106.4,111.5"/><path d="M123.4,134.8 L123.3,133.0 L124.9,132.8 L126.2,130.0 L129.7,129.7 L131.8,130.3 L133.0,127.6 L134.6,129.8 L135.7,127.7 L136.8,128.4 L139.8,128.3 L140.1,128.5 L143.1,130.1 L144.1,129.9 L146.8,130.7 L146.6,131.0 L149.8,132.9 L149.5,133.9 L150.5,135.8 L152.8,135.6 L154.5,135.3 L155.2,137.6 L154.8,140.5 L154.8,140.8 L157.1,142.3 L156.3,144.8 L156.6,147.3 L159.2,146.7 L158.3,150.2 L157.2,151.9 L156.6,151.3 L155.9,153.9 L154.5,155.2 L154.7,156.2 L153.1,158.4 L152.7,158.9 L152.5,159.3 L151.1,160.6 L149.0,160.5 L146.8,161.6 L146.0,161.4 L142.9,160.3 L141.1,160.3 L140.1,158.6 L138.7,160.1 L137.1,159.7 L134.6,157.1 L132.6,157.2 L132.2,156.3 L130.3,156.5 L128.3,156.1 L128.1,154.4 L127.2,152.8 L124.6,151.6 L123.5,150.2 L124.1,149.3 L122.4,148.0 L121.0,147.2 L120.4,144.3 L119.5,144.0 L121.6,142.6 L119.9,139.9 L121.0,137.8 L123.0,135.6 L122.0,135.8 L122.4,133.5"/><path d="M175.7,48.6 L175.3,48.8 L175.2,46.2 L178.4,44.6 L178.1,43.6 L179.2,41.7 L179.2,42.8 L182.5,41.3 L182.6,39.1 L184.8,38.3 L186.0,39.2 L187.2,36.8 L190.2,36.6 L189.2,35.2 L192.5,33.8 L193.4,34.9 L196.5,34.0 L198.3,33.1 L198.7,33.5 L200.4,32.8 L201.7,31.1 L203.1,30.9 L204.5,29.2 L206.2,29.2 L207.9,28.4 L211.2,28.2 L212.3,26.2 L212.6,25.1 L214.9,25.1 L215.1,23.1 L216.2,22.7 L218.1,23.3 L220.3,20.5 L220.7,19.0 L223.5,18.5 L224.4,18.3 L226.1,15.4 L225.9,15.2 L226.9,15.8 L229.1,14.9 L231.1,12.3 L232.3,12.2 L233.0,11.3 L236.0,10.3 L236.8,10.6 L239.0,9.2 L240.9,8.9 L242.6,9.7 L242.7,8.3 L244.6,9.5 L246.6,8.4 L249.4,7.8 L249.5,7.9 L250.9,6.9 L252.0,8.2 L255.0,8.5 L257.6,7.0 L258.6,8.8 L259.2,8.5 L262.1,9.4 L264.4,7.8 L265.5,7.7 L266.7,8.7 L267.5,8.9 L270.0,9.5 L270.8,9.9 L272.1,11.9 L272.5,13.7 L273.7,13.4 L275.0,15.5 L275.5,17.2 L277.9,18.4 L278.9,18.3 L277.5,20.9 L276.1,22.7 L275.5,24.6 L276.3,26.3 L275.1,27.4 L273.7,29.4 L275.4,31.7 L272.6,33.1 L271.2,33.8 L271.1,36.3 L269.2,36.5 L269.6,38.2 L267.5,39.0 L265.8,39.7 L264.2,42.0 L264.6,42.0 L263.5,42.3 L260.3,44.9 L259.7,45.8 L260.3,46.6 L257.2,48.1 L257.3,49.5 L254.4,51.6 L254.3,52.2 L253.5,54.6 L252.5,55.8 L252.0,58.1 L252.5,58.5 L250.3,61.6 L249.6,62.9 L250.1,64.6 L250.2,66.6 L247.5,67.8 L247.6,69.2 L246.6,69.9 L246.8,72.1 L244.7,72.8 L244.2,74.2 L243.9,75.5 L242.0,76.9 L241.4,80.0 L240.7,80.9 L241.8,82.6 L239.5,85.1 L240.7,84.6 L238.4,87.3 L239.2,88.6 L238.3,89.7 L237.6,91.5 L236.0,94.2 L237.9,96.1 L237.7,96.7 L238.7,99.0 L239.5,101.1 L238.3,101.8 L240.3,103.1 L239.6,104.2 L239.4,107.8 L239.2,106.9 L237.3,108.9 L235.9,110.0 L235.5,112.8 L231.6,111.3 L230.2,108.7 L229.0,109.7 L229.3,107.3 L226.0,106.3 L225.3,106.5 L223.6,105.0 L223.4,105.4 L220.8,103.2 L220.5,103.2 L220.2,101.2 L218.2,100.6 L217.2,98.6 L214.8,97.0 L216.0,95.9 L214.1,94.0 L212.9,92.3 L212.8,91.1 L212.2,89.9 L210.4,89.0 L210.1,86.9 L208.6,84.8 L210.1,83.9 L207.3,82.0 L207.7,82.6 L206.3,80.7 L206.4,77.9 L206.5,76.3 L203.9,75.2 L204.8,73.8 L203.0,73.2 L203.6,71.9 L201.7,70.1 L201.6,66.9 L198.9,65.5 L198.3,63.8 L198.0,64.2 L196.8,62.4 L194.8,60.5 L196.2,58.8 L193.9,59.7 L193.4,58.4 L191.3,57.4 L191.3,56.2 L190.0,54.1 L188.2,54.6 L185.9,53.9 L184.8,52.9 L182.3,53.1 L180.1,53.2 L179.3,53.3 L177.0,51.9 L175.5,49.9 L174.4,49.5"/><path d="M253.5,3.0 L253.0,2.9 L256.4,2.3 L258.1,3.0 L259.7,1.9 L259.9,1.6 L262.2,2.1 L263.0,2.1 L265.7,1.4 L267.8,2.9 L268.6,2.5 L270.5,3.0 L271.5,4.5 L273.9,5.3 L275.0,4.7 L277.8,4.9 L278.2,7.1 L281.6,7.0 L279.4,8.7 L281.3,9.8 L280.2,12.0 L280.0,13.2 L279.7,16.5 L280.1,17.4 L279.0,18.9 L277.8,21.2 L279.1,21.8 L278.8,23.3 L277.2,24.1 L276.9,26.4 L275.8,26.3 L275.2,28.7 L274.2,30.4 L274.2,30.6 L272.1,34.1 L271.9,33.7 L271.0,36.8 L269.0,35.3 L267.1,34.5 L266.9,31.4 L266.7,31.3 L265.8,30.6 L264.3,28.7 L263.7,26.4 L262.6,26.6 L260.3,25.3 L260.0,23.1 L260.4,20.7 L258.1,20.4 L256.8,18.6 L257.9,17.0 L255.7,16.3 L256.8,14.5 L255.4,13.1 L255.5,9.5 L253.8,7.6 L252.3,6.5 L253.9,6.1 L252.4,3.5"/><path d="M233.4,110.7 L235.8,113.0 L238.1,113.7 L238.4,114.5 L240.5,114.1 L244.0,114.9 L243.9,115.4 L246.2,114.2 L247.5,115.5 L249.8,115.8 L251.3,117.3 L251.8,116.3 L254.7,117.6 L254.8,117.2 L258.4,118.9 L258.5,118.3 L261.7,120.0 L262.8,119.4 L263.4,119.8 L264.7,120.6 L267.2,121.3 L268.9,120.6 L270.9,122.1 L272.3,121.8 L273.7,121.7 L273.6,124.2 L273.3,125.9 L274.0,126.5 L274.4,128.1 L273.6,130.3 L272.6,130.7 L272.2,132.9 L271.1,136.0 L269.6,136.7 L269.5,136.8 L267.7,137.9 L267.9,139.5 L265.5,141.1 L265.5,143.7 L263.7,144.3 L261.4,146.5 L260.7,146.7 L260.7,149.2 L260.8,149.8 L260.8,152.9 L257.8,153.6 L258.3,154.5 L257.6,155.9 L257.5,158.2 L257.6,160.7 L257.0,160.9 L255.9,163.2 L254.9,165.8 L252.6,166.1 L252.8,168.2 L251.7,170.8 L249.6,168.5 L247.5,167.9 L247.0,166.4 L245.5,166.3 L246.7,164.9 L245.8,163.5 L247.0,161.8 L245.4,159.4 L245.1,158.8 L247.6,157.3 L245.2,154.3 L246.5,153.2 L245.4,152.3 L245.5,149.9 L244.6,148.5 L244.2,145.6 L244.8,144.6 L245.1,142.8 L243.8,140.7 L242.9,140.2 L243.4,138.6 L243.7,136.1 L243.3,134.6 L242.9,134.1 L240.7,132.8 L241.1,132.2 L239.2,128.2 L237.7,128.8 L238.5,127.1 L236.3,125.1 L235.2,122.5 L235.6,123.0 L236.2,121.0 L234.4,118.1 L234.2,116.0 L234.0,116.0 L234.2,113.2 L234.4,111.5"/><path d="M72.8,132.5 L74.6,130.3 L74.4,129.9 L75.1,127.0 L76.2,128.5 L75.4,130.6 L75.8,132.1 L75.9,134.0 L75.1,136.7 L75.3,137.6 L75.2,138.6 L73.0,139.1 L72.4,141.5"/><path d="M90.1,121.0 L92.4,118.8 L93.5,121.5 L93.4,123.5"/><path d="M125.1,99.3 L128.6,96.9 L128.6,98.0 L129.1,95.8 L129.4,96.6 L130.4,99.1 L129.9,100.5 L130.8,102.8 L129.9,102.8 L131.4,105.5"/><path d="M169.8,157.9 L172.2,160.0 L173.3,161.6 L172.8,164.0 L171.3,166.1 L172.3,165.7 L170.4,167.5"/></g><g stroke="#666" stroke-width="0.45" fill="none" opacity="0.5"><path d="M34.0,44.1 L36.5,45.0 L36.5,46.5 L38.0,47.5 L40.5,49.4 L42.2,48.8 L44.3,51.5 L45.1,51.3 L46.9,53.3 L48.6,55.2 L50.9,54.1 L52.5,55.5 L54.3,56.1 L55.6,56.9 L56.8,57.4 L59.9,57.6 L60.5,58.5 L63.5,57.3 L64.3,55.9 L66.5,56.9 L68.9,56.2 L70.1,54.6 L72.6,54.8 L73.6,54.2 L76.2,52.4 L77.9,52.9 L80.2,53.8 L81.7,53.2 L83.3,53.1 L84.5,52.9 L86.5,52.4 L88.3,51.7 L90.1,51.6 L92.8,51.7 L94.2,51.6 L96.9,51.4 L98.2,51.8 L100.8,51.7 L102.1,51.7 L103.0,52.9 L105.5,52.1 L106.3,53.4 L108.7,53.4 L110.6,53.4 L112.7,54.3 L115.2,53.4 L116.2,53.5 L118.5,53.8 L119.5,55.8 L120.7,56.1 L123.6,56.3 L125.0,56.1 L128.0,57.8 L129.6,57.1 L131.3,57.8 L132.0,59.0 L134.4,59.5"/><path d="M59.6,57.7 L60.6,60.5 L61.6,63.1 L61.9,63.8 L63.2,66.4 L62.6,68.5 L64.1,69.2 L63.9,70.5 L66.0,72.2 L67.0,73.4 L68.2,75.1 L69.9,75.9 L71.5,77.5 L74.1,78.0 L75.6,80.6 L76.6,81.2 L78.4,82.4 L79.7,84.3 L81.8,83.3 L82.3,84.9 L84.8,84.8 L86.4,84.4 L88.5,85.2 L91.5,85.0 L92.7,84.9 L93.9,86.4 L95.3,87.3 L98.0,86.4 L100.2,87.4 L101.2,88.3 L103.7,89.6 L105.1,90.0 L106.4,90.9 L106.8,92.8 L110.4,93.9 L112.0,94.1 L113.2,92.7 L115.1,92.9 L117.0,93.2 L118.8,92.9 L121.1,93.3 L122.5,92.7 L124.4,93.5"/><path d="M34.4,93.6 L36.5,95.1 L36.1,96.1 L37.7,98.4 L40.1,100.5 L41.3,101.9 L42.3,103.4 L41.8,104.0 L44.2,105.9 L45.4,107.2 L47.3,107.7 L48.4,109.5 L49.5,108.0 L53.1,109.8 L53.4,108.1 L57.1,109.5 L58.4,109.4 L60.9,110.0 L62.4,109.5"/><path d="M188.4,52.6 L191.9,54.5 L193.9,53.3 L194.8,53.2 L196.1,54.0 L198.5,53.7 L201.0,53.2 L203.2,53.4 L204.3,54.3 L206.1,52.8 L208.1,53.5 L211.1,53.2 L212.0,53.8 L213.9,53.5 L215.8,54.1 L217.6,52.7 L219.8,52.7 L222.5,53.2 L224.6,52.8 L225.1,53.1 L227.4,51.9 L229.6,53.2 L231.4,51.8 L234.5,52.9 L235.3,51.1 L238.1,52.2 L239.4,51.5"/><path d="M214.1,94.1 L216.0,93.5 L218.2,94.9 L219.8,95.5 L220.7,95.3 L223.3,94.9 L226.1,95.5 L226.5,97.4 L229.9,98.0 L230.4,98.5 L231.9,98.5 L234.4,98.5"/><path d="M250.3,132.9 L250.1,135.0 L253.0,136.2 L254.6,136.8 L254.9,137.3 L256.1,140.1 L257.1,139.7 L259.4,141.5"/><path d="M39.1,62.6 L40.4,64.0 L41.5,65.8 L43.8,67.1 L45.6,68.1 L47.4,68.4 L47.4,69.5 L49.0,72.0 L51.6,73.1 L51.5,74.4 L53.7,75.9 L55.6,78.8 L56.4,79.5"/><path d="M94.3,33.7 L96.8,34.3 L97.1,36.1 L100.4,35.0 L101.6,36.6 L101.8,37.0 L103.7,39.0 L105.5,38.4 L107.2,40.8 L109.4,41.3 L111.0,41.2 L111.8,42.3 L113.5,43.0 L116.5,43.2 L118.0,43.7 L119.5,43.2 L122.4,43.7 L123.3,43.6 L125.2,43.2 L128.0,43.0 L129.8,44.2 L131.5,42.8 L132.6,44.5 L134.4,43.5"/><path d="M20.0,92.8 L22.6,94.0 L24.1,94.8 L26.5,96.1 L26.6,97.9 L28.8,98.6 L30.9,100.3 L32.7,100.3 L33.4,101.5 L35.9,101.9 L38.7,101.9 L39.6,102.2 L42.4,102.8 L45.3,102.3 L46.3,102.2 L49.0,102.7 L50.4,103.5"/><path d="M25.1,116.1 L25.7,116.8 L28.0,116.2 L29.8,117.7 L31.5,117.2 L32.9,118.4 L35.1,117.9 L36.2,118.0 L39.3,119.7 L41.4,120.3 L42.5,119.7 L44.4,119.2 L46.3,117.5 L48.1,117.3 L48.8,118.1 L50.1,116.9 L52.5,117.0 L54.8,116.8 L56.4,115.5"/><path d="M35.3,128.8 L35.3,129.5 L37.1,130.7 L40.4,130.0 L40.8,131.4 L43.7,132.6 L45.1,131.5 L47.1,132.0 L48.4,133.5"/><path d="M27.1,64.0 L28.3,65.6 L29.2,67.1 L30.7,67.5 L31.5,68.5 L32.1,69.5 L34.4,71.5"/><path d="M19.0,65.0 L20.3,65.1 L21.9,63.5 L22.7,62.0 L24.1,61.8 L26.6,61.4 L27.5,60.4 L30.2,58.1 L32.0,57.9 L33.7,57.4 L34.1,55.6 L36.1,55.1 L36.8,55.1 L39.4,53.5"/><path d="M49.5,43.4 L51.1,44.7 L51.1,47.0 L52.4,48.2 L53.2,49.3 L54.9,51.9 L56.4,53.5"/><path d="M230.3,43.8 L230.2,44.8 L230.9,46.4 L233.3,47.2 L233.3,49.9 L234.9,51.1 L235.7,53.4 L237.2,53.5 L237.5,56.5 L238.5,56.4 L239.4,58.5"/><path d="M204.9,62.6 L205.6,64.2 L207.7,65.2 L210.5,65.0 L212.4,66.3 L214.2,66.5 L215.5,66.5 L217.5,68.8 L219.4,68.5"/><path d="M245.2,122.6 L244.4,124.7 L246.6,126.7 L246.3,128.4 L248.1,130.7 L248.7,132.1 L250.1,133.7 L249.7,135.6 L250.8,135.9 L252.3,137.5 L251.2,140.2 L251.6,141.5 L252.2,144.8 L250.9,146.2 L250.2,148.8 L249.4,149.4 L249.2,152.4 L249.4,153.5"/><path d="M254.4,128.3 L256.1,128.9 L257.7,128.3 L260.4,127.3 L261.6,126.9 L263.7,126.3 L265.9,126.1 L267.1,126.4 L269.4,125.5"/><path d="M74.3,63.4 L76.2,64.9 L76.2,67.3 L78.4,68.6 L78.2,69.8 L79.9,70.6 L80.8,73.4 L81.7,74.3 L82.4,75.5"/><path d="M104.3,63.8 L105.4,65.0 L107.5,66.5 L108.6,66.9 L109.4,67.3 L112.4,68.0 L113.6,68.9 L114.7,71.5 L115.8,72.3 L117.0,72.7 L119.4,73.5"/><path d="M85.0,94.2 L85.6,95.1 L87.7,96.9 L89.2,97.9 L89.6,99.6 L91.7,100.7 L93.9,101.3 L94.4,103.5"/></g><circle cx="103.7" cy="41.9" r="8.5" fill="rgba(70,110,230,.75)"/><circle cx="101.4" cy="78.2" r="28.7" fill="rgba(255,60,60,.72)"/><circle cx="84.7" cy="94.8" r="28.7" fill="rgba(255,60,60,.72)"/><circle cx="114.9" cy="117.5" r="12" fill="rgba(255,60,60,.72)"/><circle cx="135.4" cy="84.2" r="7.5" fill="rgba(255,60,60,.72)"/><circle cx="228.4" cy="76.7" r="13" fill="rgba(150,215,245,.8)"/><circle cx="266.2" cy="122.1" r="10" fill="rgba(250,190,80,.8)"/><circle cx="227.8" cy="99.4" r="6" fill="rgba(250,190,80,.8)"/><circle cx="252.4" cy="145.5" r="2.5" fill="rgba(250,190,80,.8)"/><circle cx="19.4" cy="57.5" r="3.2" fill="rgba(70,110,230,.75)"/><circle cx="34.4" cy="65.5" r="3.6" fill="rgba(70,110,230,.75)"/><circle cx="20.4" cy="72.5" r="3.2" fill="rgba(70,110,230,.75)"/><circle cx="34.4" cy="80.5" r="3.2" fill="rgba(70,110,230,.75)"/><circle cx="54.4" cy="79.5" r="3.6" fill="rgba(90,180,70,.75)"/><circle cx="41.4" cy="140.5" r="2.8" fill="rgba(60,150,60,.75)"/><circle cx="58.4" cy="93.5" r="3" fill="rgba(150,200,60,.8)"/></svg>
    <div class="a" style="left:6.4px;top:3.6px;font-size:6.5px;line-height:7.5px;color:#333;font-weight:bold;white-space:nowrap;-webkit-text-stroke:0">人口（単位：百万人）</div><div class="a" style="left:94.4px;top:35.3px;font-size:7px;line-height:8px;color:#333;font-weight:bold;white-space:nowrap;-webkit-text-stroke:0">ロシア</div><div class="a" style="left:97.4px;top:42.3px;font-size:7px;line-height:8px;color:#333;font-weight:bold;white-space:nowrap;-webkit-text-stroke:0">146</div><div class="a" style="left:6.4px;top:49.3px;font-size:7px;line-height:8px;color:#333;font-weight:bold;white-space:nowrap;-webkit-text-stroke:0">イギリス</div><div class="a" style="left:16.4px;top:55.3px;font-size:7px;line-height:8px;color:#333;font-weight:bold;white-space:nowrap;-webkit-text-stroke:0">68</div><div class="a" style="left:29.4px;top:56.3px;font-size:7px;line-height:8px;color:#333;font-weight:bold;white-space:nowrap;-webkit-text-stroke:0">ドイツ</div><div class="a" style="left:29.4px;top:62.3px;font-size:7px;line-height:8px;color:#333;font-weight:bold;white-space:nowrap;-webkit-text-stroke:0">84</div><div class="a" style="left:6.4px;top:64.3px;font-size:7px;line-height:8px;color:#333;font-weight:bold;white-space:nowrap;-webkit-text-stroke:0">フランス</div><div class="a" style="left:15.4px;top:70.3px;font-size:7px;line-height:8px;color:#333;font-weight:bold;white-space:nowrap;-webkit-text-stroke:0">65</div><div class="a" style="left:24.4px;top:69.3px;font-size:7px;line-height:8px;color:#333;font-weight:bold;white-space:nowrap;-webkit-text-stroke:0">イタリア</div><div class="a" style="left:31.4px;top:77.3px;font-size:7px;line-height:8px;color:#333;font-weight:bold;white-space:nowrap;-webkit-text-stroke:0">60</div><div class="a" style="left:46.4px;top:68.3px;font-size:7px;line-height:8px;color:#333;font-weight:bold;white-space:nowrap;-webkit-text-stroke:0">トルコ</div><div class="a" style="left:48.4px;top:74.3px;font-size:7px;line-height:8px;color:#333;font-weight:bold;white-space:nowrap;-webkit-text-stroke:0">84</div><div class="a" style="left:38.4px;top:83.3px;font-size:7px;line-height:8px;color:#333;font-weight:bold;white-space:nowrap;-webkit-text-stroke:0">サウジアラビア</div><div class="a" style="left:51.4px;top:90.3px;font-size:7px;line-height:8px;color:#333;font-weight:bold;white-space:nowrap;-webkit-text-stroke:0">35</div><div class="a" style="left:89.4px;top:69.3px;font-size:7px;line-height:8px;color:#333;font-weight:bold;white-space:nowrap;-webkit-text-stroke:0">中国</div><div class="a" style="left:94.4px;top:75.3px;font-size:7px;line-height:8px;color:#333;font-weight:bold;white-space:nowrap;-webkit-text-stroke:0">1439</div><div class="a" style="left:82.4px;top:87.3px;font-size:7px;line-height:8px;color:#333;font-weight:bold;white-space:nowrap;-webkit-text-stroke:0">インド</div><div class="a" style="left:76.4px;top:94.3px;font-size:7px;line-height:8px;color:#333;font-weight:bold;white-space:nowrap;-webkit-text-stroke:0">1380</div><div class="a" style="left:120.4px;top:72.3px;font-size:7px;line-height:8px;color:#333;font-weight:bold;white-space:nowrap;-webkit-text-stroke:0">韓国</div><div class="a" style="left:122.4px;top:78.3px;font-size:7px;line-height:8px;color:#333;font-weight:bold;white-space:nowrap;-webkit-text-stroke:0">52</div><div class="a" style="left:130.4px;top:73.3px;font-size:7px;line-height:8px;color:#333;font-weight:bold;white-space:nowrap;-webkit-text-stroke:0">日本</div><div class="a" style="left:128.4px;top:81.3px;font-size:7px;line-height:8px;color:#333;font-weight:bold;white-space:nowrap;-webkit-text-stroke:0">126</div><div class="a" style="left:96.4px;top:110.3px;font-size:7px;line-height:8px;color:#333;font-weight:bold;white-space:nowrap;-webkit-text-stroke:0">インドネシア</div><div class="a" style="left:109.4px;top:117.3px;font-size:7px;line-height:8px;color:#333;font-weight:bold;white-space:nowrap;-webkit-text-stroke:0">274</div><div class="a" style="left:109.4px;top:126.3px;font-size:7px;line-height:8px;color:#333;font-weight:bold;white-space:nowrap;-webkit-text-stroke:0">オーストラリア</div><div class="a" style="left:130.4px;top:133.3px;font-size:7px;line-height:8px;color:#333;font-weight:bold;white-space:nowrap;-webkit-text-stroke:0">25</div><div class="a" style="left:26.4px;top:132.3px;font-size:7px;line-height:8px;color:#333;font-weight:bold;white-space:nowrap;-webkit-text-stroke:0">南アフリカ</div><div class="a" style="left:38.4px;top:139.3px;font-size:7px;line-height:8px;color:#333;font-weight:bold;white-space:nowrap;-webkit-text-stroke:0">59</div><div class="a" style="left:204.4px;top:45.3px;font-size:7px;line-height:8px;color:#333;font-weight:bold;white-space:nowrap;-webkit-text-stroke:0">カナダ</div><div class="a" style="left:209.4px;top:52.3px;font-size:7px;line-height:8px;color:#333;font-weight:bold;white-space:nowrap;-webkit-text-stroke:0">38</div><div class="a" style="left:206.4px;top:69.3px;font-size:7px;line-height:8px;color:#333;font-weight:bold;white-space:nowrap;-webkit-text-stroke:0">アメリカ合衆国</div><div class="a" style="left:220.4px;top:75.3px;font-size:7px;line-height:8px;color:#333;font-weight:bold;white-space:nowrap;-webkit-text-stroke:0">331</div><div class="a" style="left:216.4px;top:90.3px;font-size:7px;line-height:8px;color:#333;font-weight:bold;white-space:nowrap;-webkit-text-stroke:0">メキシコ</div><div class="a" style="left:220.4px;top:97.3px;font-size:7px;line-height:8px;color:#333;font-weight:bold;white-space:nowrap;-webkit-text-stroke:0">129</div><div class="a" style="left:254.4px;top:113.3px;font-size:7px;line-height:8px;color:#333;font-weight:bold;white-space:nowrap;-webkit-text-stroke:0">ブラジル</div><div class="a" style="left:259.4px;top:120.3px;font-size:7px;line-height:8px;color:#333;font-weight:bold;white-space:nowrap;-webkit-text-stroke:0">213</div><div class="a" style="left:234.4px;top:138.3px;font-size:7px;line-height:8px;color:#333;font-weight:bold;white-space:nowrap;-webkit-text-stroke:0">アルゼンチン</div><div class="a" style="left:247.4px;top:145.3px;font-size:7px;line-height:8px;color:#333;font-weight:bold;white-space:nowrap;-webkit-text-stroke:0">45</div>
    <div class="a" style="left:158.4px;top:93.5px;font-size:13px;font-weight:bold;color:#333;white-space:nowrap">2020年</div>
  </div>
  <div class="ft" style="top:280px;background:#8a8a8a;padding-right:13px">2022年04月01日 更新</div>
</div>
<div class="card" style="left:54px;top:808px;height:120px;background:#cdeafb">
  <div class="a" style="left:4.9px;top:3.5px"><svg width="40" height="40" viewBox="0 0 40 40" fill="#1a7aa8"><g transform="scale(0.323)">
    <ellipse cx="34" cy="22.4" rx="8.9" ry="9.5"/>
    <path d="M22.5,38 Q23,34 27,34 L37,34 Q41,34 41,38 L41,51 L53,59.5 L60,59.5 L60,67 L52,67 L41,60 L41,78 L44.5,86 L45,114 L36,114 L35,90 L30,80 L19,104 L17,114 L10,107 L17,88 L19.5,76 Z"/>
    <rect x="53.7" y="59.8" width="6.1" height="45.5"/>
    <rect x="53.7" y="99.2" width="46.8" height="6.1"/>
    <circle cx="64.5" cy="109.4" r="4.8"/>
    <circle cx="91" cy="109.4" r="4.8"/>
    <rect x="63.9" y="31.2" width="23.1" height="24.5"/>
    <rect x="63.9" y="60.7" width="36" height="34.1"/>
  </g></svg></div>
  <div class="ct" style="left:47px;top:10px;font-size:18px;color:#1d6ca5">失業率と求人倍率</div>
  <div class="cl" style="top:44px"></div>
  <div class="a" style="right:9px;top:53px;font-size:13px;font-weight:bold;color:#1d6ca5;white-space:nowrap">（季節調整値）完全失業率（男女計）</div>
</div>
<div class="card" style="left:358px;top:808px;height:120px;background:#f2c4cd">
  <div class="a" style="left:10px;top:11px"><svg width="26" height="27" viewBox="0 0 26 27" fill="#802a8c"><circle cx="10.9" cy="3" r="1.6"/><circle cx="14.8" cy="3" r="1.6"/><rect x="10.9" y="1.6" width="3.9" height="3.2"/><path d="M3.9,11.5 L3.9,9 Q3.9,5.6 7.5,5.6 L18.2,5.6 Q21.9,5.6 21.9,9 L21.9,11.5" stroke="#802a8c" stroke-width="1.6" fill="none"/><rect x="5.6" y="7.2" width="14.5" height="1.2" fill="#e6a2dc"/><rect x="5.6" y="8.3" width="14.5" height="5.5"/><path d="M1.6,16 Q2.5,13 5.6,13 L20.1,13 Q23.2,13 24.1,16 Q25.5,22 22,24.5 Q18.5,26.6 12.85,26.6 Q7.2,26.6 3.7,24.5 Q0.2,22 1.6,16 Z"/></svg></div>
  <div class="ct" style="left:47px;top:10px;font-size:18px;color:#6e3a7c">消費者物価指数</div>
  <div class="cl" style="top:44px"></div>
  <div class="a" style="right:12px;top:53px;font-size:13px;font-weight:bold;color:#6e3a7c;white-space:nowrap">消費者物価指数（総合）2020年基準</div>
</div>
<div class="card" style="left:662px;top:808px;height:120px;background:#f2c4cd">
  <div class="a" style="left:10px;top:11px"><svg width="26" height="27" viewBox="0 0 26 27" fill="#802a8c"><circle cx="10.9" cy="3" r="1.6"/><circle cx="14.8" cy="3" r="1.6"/><rect x="10.9" y="1.6" width="3.9" height="3.2"/><path d="M3.9,11.5 L3.9,9 Q3.9,5.6 7.5,5.6 L18.2,5.6 Q21.9,5.6 21.9,9 L21.9,11.5" stroke="#802a8c" stroke-width="1.6" fill="none"/><rect x="5.6" y="7.2" width="14.5" height="1.2" fill="#e6a2dc"/><rect x="5.6" y="8.3" width="14.5" height="5.5"/><path d="M1.6,16 Q2.5,13 5.6,13 L20.1,13 Q23.2,13 24.1,16 Q25.5,22 22,24.5 Q18.5,26.6 12.85,26.6 Q7.2,26.6 3.7,24.5 Q0.2,22 1.6,16 Z"/></svg></div>
  <div class="ct" style="left:47px;top:10px;font-size:18px;color:#6e3a7c">金融市場</div>
  <div class="cl" style="top:44px"></div>
  <div class="a" style="right:12px;top:53px;font-size:13px;font-weight:bold;color:#6e3a7c;white-space:nowrap;letter-spacing:0.4px">コールレート（無担保O／N物）</div>
</div>
</body></html>
